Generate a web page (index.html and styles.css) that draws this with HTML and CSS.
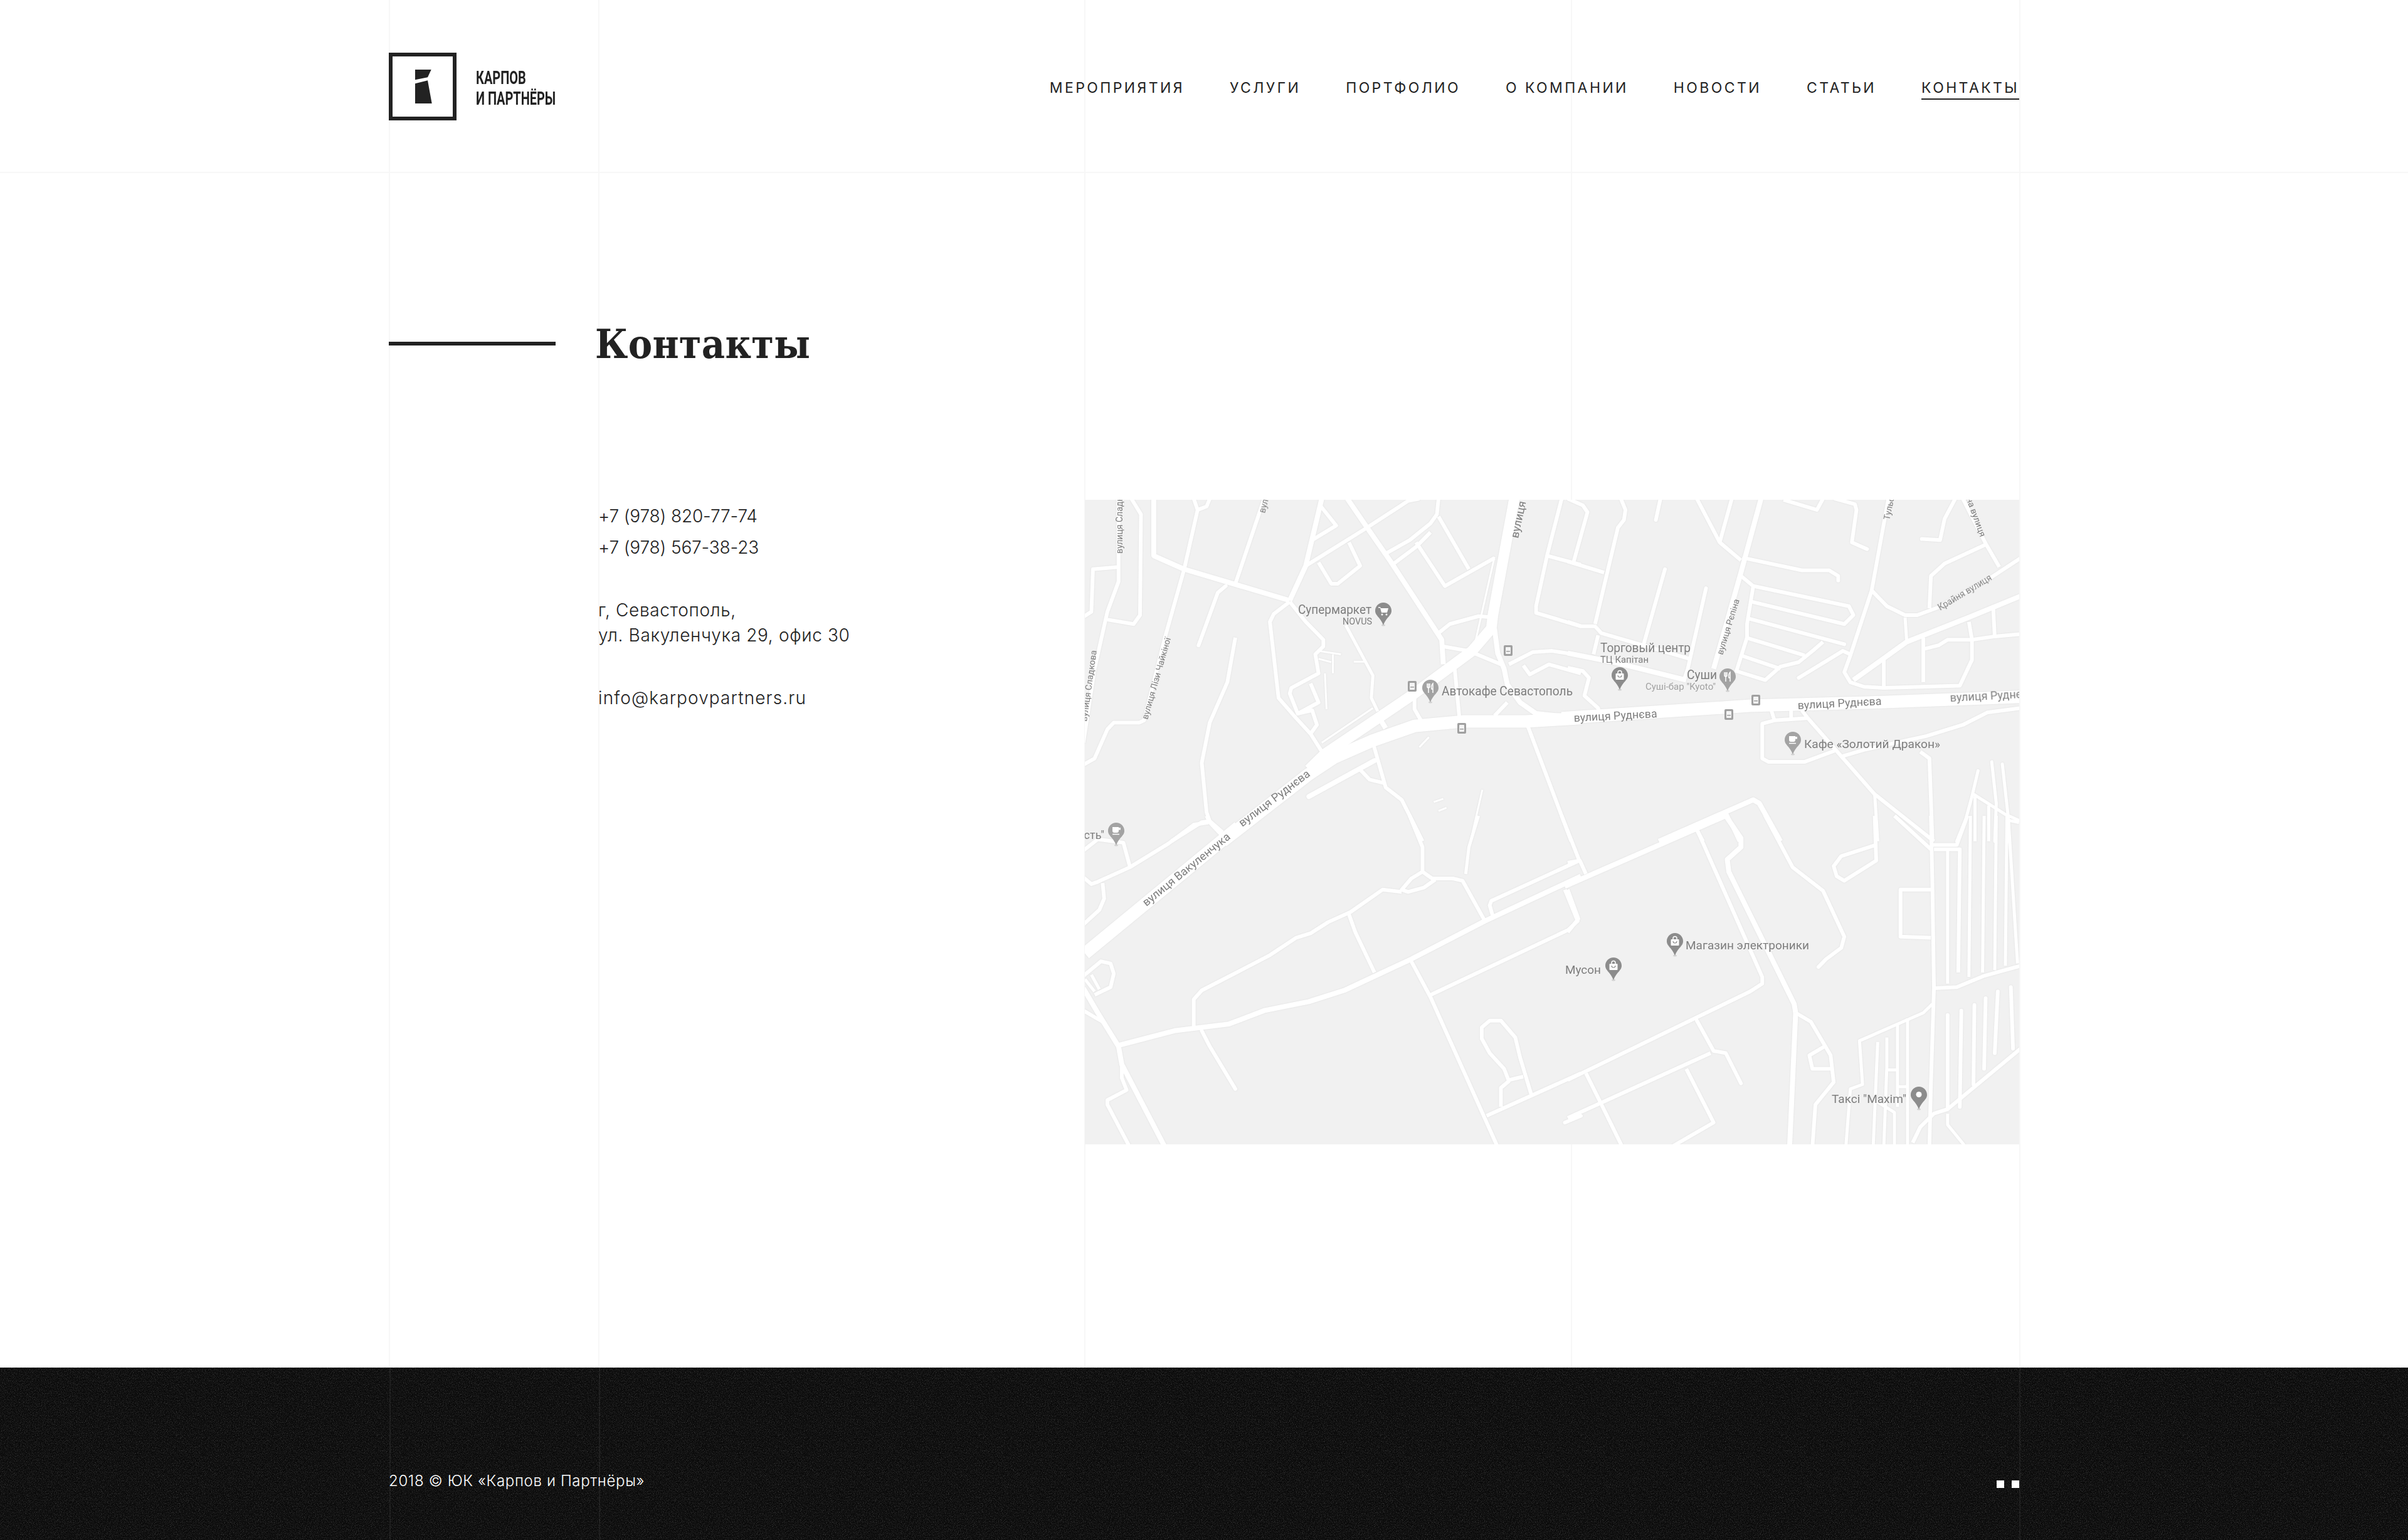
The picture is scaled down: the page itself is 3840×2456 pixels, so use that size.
FILE: index.html
```html
<!DOCTYPE html>
<html lang="ru">
<head>
    <meta charset="UTF-8">
    <title>Контакты — Карпов и Партнёры</title>
    <link rel="stylesheet" href="styles.css">
</head>
<body>

<header class="site-header">
    <div class="wrap header-row">
        <a class="logo" href="#">
            <span class="logo-mark">
                <svg viewBox="0 0 27 54" width="27" height="54"><path d="M0 0H25.700L20 12.300 0 16.300zM0 22.300L20 17.300 26.700 54H0z" fill="#222"/></svg>
            </span>
            <span class="logo-text">Карпов<br>и партнёры</span>
        </a>
        <nav class="main-nav">
            <a href="#">Мероприятия</a>
            <a href="#">Услуги</a>
            <a href="#">Портфолио</a>
            <a href="#">О компании</a>
            <a href="#">Новости</a>
            <a href="#">Статьи</a>
            <a class="active" href="#">Контакты</a>
        </nav>
    </div>
</header>

<main class="wrap">
    <div class="title-row">
        <span class="title-rule"></span>
        <h1>Контакты</h1>
    </div>

    <div class="contacts-grid">
        <div class="contacts">
            <p class="phones"><a href="#">+7 (978) 820-77-74</a><br><a href="#">+7 (978) 567-38-23</a></p>
            <p class="address">г, Севастополь,<br>ул. Вакуленчука 29, офис 30</p>
            <p class="email"><a href="#">info@karpovpartners.ru</a></p>
        </div>

        <div class="map">
            <svg viewBox="1730 796 1490 1028" width="1490" height="1028">
                <defs>
                    <g id="pin-body">
                        <ellipse cx="13" cy="36" rx="3" ry="1.500" fill="#d4d4d4"/>
                        <path d="M13 0C5.800 0 0 5.800 0 13c0 8 8 10 13 23 5-13 13-15 13-23C26 5.800 20.200 0 13 0z"/>
                    </g>
                    <g id="pin-cart" fill="#8c8c8c">
                        <use href="#pin-body"/>
                        <path d="M5 7h3l1 2h12l-2 7H10L8 8.500H5z" fill="#fff"/>
                        <circle cx="11" cy="19" r="1.500" fill="#fff"/><circle cx="18" cy="19" r="1.500" fill="#fff"/>
                    </g>
                    <g id="pin-food" fill="#a3a3a3">
                        <use href="#pin-body"/>
                        <path d="M8 6v5a2 2 0 0 0 4 0V6M10 6v15M17 21V6c-2 2-3 5-2 9h2" fill="none" stroke="#fff" stroke-width="1.500"/>
                    </g>
                    <g id="pin-bag" fill="#8c8c8c">
                        <use href="#pin-body"/>
                        <path d="M10 10V8.500a3 3 0 0 1 6 0V10" fill="none" stroke="#fff" stroke-width="1.500"/>
                        <rect x="6.500" y="10" width="13" height="10" rx="1" fill="#fff"/>
                        <path d="M10 13a3 3 0 0 0 6 0" fill="none" stroke="#8c8c8c" stroke-width="1.200"/>
                    </g>
                    <g id="pin-cafe" fill="#a3a3a3">
                        <use href="#pin-body"/>
                        <path d="M7 7h10v6a3 3 0 0 1-3 3h-4a3 3 0 0 1-3-3zM17 8h3v3.500h-3" fill="#fff"/>
                        <path d="M7 18.500h11" stroke="#fff" stroke-width="1.500"/>
                    </g>
                    <g id="pin-taxi" fill="#8c8c8c">
                        <use href="#pin-body"/>
                        <circle cx="13" cy="12.500" r="4.500" fill="#fff"/>
                    </g>
                    <g id="bus">
                        <rect width="14" height="17" rx="2" fill="#a0a0a0"/>
                        <rect x="3" y="3" width="8" height="11" rx="1" fill="#f4f4f4"/>
                        <path d="M4 9h6v1.500H4z" fill="#a0a0a0"/>
                    </g>
                </defs>

                <rect class="map-ground" x="1730" y="796" width="1490" height="1028"/>

                <g class="roads">
                    <!-- north-west part -->
                    <g transform="translate(1720 780) scale(.5102 .3571)">
                        <path class="w5" d="M165 40 195 110 192 560 172 600 90 580"/>
                        <path class="w7" d="M235 40V295L330 355 660 495"/>
                        <path class="w7" d="M660 495 710 340 750 100 760 40"/>
                        <path class="w5" d="M360 40 372 90 330 355 270 660 205 1030 190 1040H110L90 1070 50 1200 15 1228"/>
                        <path class="w5" d="M372 90 400 75 410 40"/>
                        <path class="w5" d="M580 40 490 420"/>
                        <path class="w5" d="M125 40V410L90 545 50 800 15 1130"/>
                        <path class="w5" d="M125 345 45 355 40 545 15 568"/>
                        <path class="w5 end" d="M460 430 435 460 375 695"/>
                        <path class="w5" d="M660 500 610 555 598 590 625 930 680 1020 725 1090 765 1180"/>
                        <path class="w5" d="M660 500 710 590 765 670V700L740 735 750 820 665 885 660 910 685 1000 750 950 725 865"/>
                        <path class="w5" d="M685 1000 730 985 745 1050 725 1090"/>
                        <path class="w5" d="M755 70 805 160 730 225"/>
                        <path class="w5" d="M710 340 890 180 1030 50 1065 40"/>
                        <path class="w7" d="M840 40 900 165 975 320 1135 670 1140 780"/>
                        <path class="w5" d="M845 235 880 340 810 420H790L750 325"/>
                        <path class="w5" d="M960 285 1035 225 1100 150 1120 110 1125 40"/>
                        <path class="w5" d="M985 330 1055 255 1100 190"/>
                        <path class="w5" d="M1055 235 1145 430 1300 305"/>
                        <path class="w5" d="M1125 120 1220 355"/>
                        <path class="w14" d="M1362 40 1295 560 1290 620 1230 720 1040 920 770 1180 720 1250"/>
                        <path class="w20" d="M1570 1020 1400 1035H1200L1050 1055 920 1120 800 1195 720 1270 450 1570"/>
                        <path class="w7" d="M1300 620 1310 730 1330 800 1340 870 1380 950 1430 1000 1570 1020"/>
                        <path class="w5" d="M1125 640 1160 600 1250 565 1295 570"/>
                        <path class="w5" d="M1140 700 1220 720 1320 780"/>
                        <path class="w5" d="M1345 780 1420 725 1480 720 1570 740"/>
                        <path class="w5" d="M1390 785 1410 825 1470 780 1570 820"/>
                        <path class="w5" d="M1510 40 1465 290 1430 520V550L1570 610"/>
                        <path class="w5" d="M1465 295 1570 335"/>
                        <path class="w5" d="M1175 790 1190 1015"/>
                        <path class="w5" d="M1050 920V980L1070 1030"/>
                        <path class="w7" d="M940 1020 960 1065"/>
                        <path class="w5" d="M1340 950 1300 1010"/>
                        <path class="w5" d="M1400 1040 1540 1570"/>
                        <path class="w5" d="M920 1130 960 1330 1010 1385 1040 1470 1075 1570"/>
                        <path class="w7 end" d="M720 1370 925 1210"/>
                        <path class="w5" d="M880 1250 910 1295 955 1310"/>
                        <path class="w3" d="M835 605 920 830 915 930 935 990"/>
                        <path class="w5" d="M490 660 465 860 410 1040 385 1220 400 1440 410 1480 450 1530"/>
                        <path class="w5" d="M410 1480 385 1485 290 1570"/>
                        <path class="w2" d="M770 820 775 980M750 720 820 735M795 735V820M750 755 790 770M860 768H900M760 1130 920 975M1065 1150 1095 1105M1110 1395 1140 1380M1125 1435 1150 1420M1262 1340 1225 1570M1300 300 1240 680"/>
                    </g>

                    <!-- north-east part -->
                    <g transform="translate(2500 780) scale(.4847 .3571)">
                        <path class="w5" d="M0 40 50 70 65 100 20 320"/>
                        <path class="w5" d="M0 320 120 370"/>
                        <path class="w5" d="M175 40 190 90 185 135 165 170 90 600"/>
                        <path class="w5 end" d="M305 40 290 135"/>
                        <path class="w5" d="M0 590 45 610H90L110 640 400 755"/>
                        <path class="w5" d="M100 650 85 735"/>
                        <path class="w5 end" d="M320 355 250 690"/>
                        <path class="w5 end" d="M455 440 395 800 385 840"/>
                        <path class="w7" d="M0 730 150 770 390 850"/>
                        <path class="w5" d="M0 795 50 810 70 840 55 920 100 975 105 1000"/>
                        <path class="w5" d="M425 40 500 235 570 315"/>
                        <path class="w7" d="M636 40 570 370 480 800"/>
                        <path class="w5" d="M540 40 500 235"/>
                        <path class="w5 end" d="M580 305 770 360H860L890 385V405"/>
                        <path class="w5" d="M570 385 610 430 925 520 940 560 910 600 605 500"/>
                        <path class="w5" d="M610 435 590 600V660L555 810 650 850 700 790 760 770 810 715 840 680"/>
                        <path class="w5 end" d="M595 575 910 690"/>
                        <path class="w5" d="M585 660 780 740"/>
                        <path class="w5" d="M570 740 700 800"/>
                        <path class="w5 end" d="M760 840 905 720 930 735"/>
                        <path class="w5" d="M710 45 820 90 840 40"/>
                        <path class="w5 end" d="M880 40 945 65 950 90 935 235 985 265"/>
                        <path class="w5" d="M1055 40 1000 450 930 740 910 815 930 860 975 880 1040 885 1290 875 1330 760V670L1320 590"/>
                        <path class="w5" d="M1000 450 1050 520 1110 560H1150L1220 525 1395 390 1490 305"/>
                        <path class="w5 end" d="M1165 220 1225 225 1240 130 1275 40"/>
                        <path class="w5" d="M1300 40 1375 240 1420 345"/>
                        <path class="w5" d="M1375 245 1240 330 1195 385 1190 530"/>
                        <path class="w3" d="M1110 570 1115 670"/>
                        <path class="w7" d="M940 850 1115 680 1320 570 1490 475"/>
                        <path class="w5" d="M1040 760V885M1170 660V860"/>
                        <path class="w5" d="M1175 710 1220 695 1250 670H1330L1405 655 1490 645"/>
                        <path class="w5" d="M1400 530 1405 660"/>
                        <path class="w20" d="M-20 1020 600 965 1000 950 1490 925"/>
                        <path class="w5" d="M670 985 680 1030 640 1045V1200L660 1215H780L880 1165"/>
                        <path class="w5" d="M680 1030 790 1020M735 985V1020"/>
                        <path class="w5" d="M770 985 790 1020 1010 1360 1205 1570"/>
                        <path class="w5" d="M905 1190 980 1160 1180 1100 1300 1050 1380 995 1490 975"/>
                        <path class="w5" d="M1160 1170 1190 1200 1200 1570"/>
                        <path class="w3" d="M1010 1360 1020 1570"/>
                        <path class="w3 end" d="M1350 1255 1330 1370 1310 1470 1280 1570"/>
                        <path class="w3 end" d="M1395 1215 1410 1400 1405 1570"/>
                        <path class="w3 end" d="M1430 1225 1450 1470V1570"/>
                        <path class="w3" d="M1335 1360 1440 1450 1490 1480"/>
                        <path class="w3" d="M1385 1410V1570M1340 1370V1570"/>
                        <path class="w7" d="M300 1570 610 1385 630 1400 700 1570"/>
                        <path class="w5" d="M520 1440 565 1570M425 1520 445 1570"/>
                    </g>

                    <!-- south-west part -->
                    <g transform="translate(1720 1300) scale(.5102 .3571)">
                        <path class="w20" d="M500 50 20 615"/>
                        <path class="w5" d="M400 0 410 30 450 90"/>
                        <path class="w5" d="M405 30 360 40 280 125 160 230 60 295 40 305 15 275"/>
                        <path class="w5" d="M15 155 60 105 140 120 160 225"/>
                        <path class="w5" d="M75 300 80 370 65 420 15 485"/>
                        <path class="w5" d="M1035 0 1075 140V250L1105 280H1170L1200 290 1270 470"/>
                        <path class="w3" d="M1250 0 1220 140 1210 260"/>
                        <path class="w5" d="M1075 250 1040 280 1010 330 1030 340 1080 320 1115 285"/>
                        <path class="w5" d="M1010 340 950 330 850 430 780 475 725 525 680 545 595 625 385 780 360 820V945"/>
                        <path class="w5" d="M845 440 865 520 925 700"/>
                        <path class="w10" d="M1570 270 1270 470 1040 640 830 780 720 830 580 870 470 930 300 960 125 1025"/>
                        <path class="w5" d="M1510 0 1565 200 1290 380 1285 400 1295 450"/>
                        <path class="w5" d="M1520 330 1560 470 1530 510 1100 800"/>
                        <path class="w5" d="M1040 650 1100 810 1310 1480"/>
                        <path class="w5 end" d="M385 960 410 1030 490 1220"/>
                        <path class="w7" d="M15 770 60 880 125 1030 135 1110 270 1480"/>
                        <path class="w5" d="M15 870 75 920"/>
                        <path class="w5" d="M135 1110V1170L150 1225 90 1270V1290L160 1480"/>
                        <path class="w5" d="M15 715 70 650 100 660 110 705 100 765 50 800"/>
                        <path class="w3" d="M40 710 65 775M20 730 50 785"/>
                        <path class="w5" d="M1415 1245 1380 1080 1365 990 1320 915H1285L1260 945V995L1285 1060 1330 1130 1345 1185 1320 1215V1300"/>
                        <path class="w5" d="M1345 1180 1390 1165"/>
                        <path class="w5" d="M1570 1150 1275 1340"/>
                        <path class="w5 end" d="M1520 1370 1570 1340"/>
                    </g>

                    <!-- south-east part -->
                    <g transform="translate(2500 1300) scale(.4847 .3571)">
                        <path class="w10" d="M-10 315 420 60 520 0"/>
                        <path class="w7" d="M520 0 570 100V140L525 195 530 250 745 840 750 880"/>
                        <path class="w5" d="M425 60 640 720V750L600 785 0 1180"/>
                        <path class="w5 end" d="M650 0 740 230 840 335 910 540 900 590 850 640 825 675"/>
                        <path class="w5" d="M0 210 40 200 60 260"/>
                        <path class="w5" d="M0 330 35 460 0 520"/>
                        <path class="w5 end" d="M425 915 480 1050 520 1060 570 1195"/>
                        <path class="w5" d="M470 1060 0 1350"/>
                        <path class="w5" d="M60 1150 115 1300 180 1480"/>
                        <path class="w5" d="M390 1130 480 1370 340 1480"/>
                        <path class="w7" d="M750 880 730 1480"/>
                        <path class="w5" d="M750 880 800 920 865 1070 875 1190 815 1290 805 1480"/>
                        <path class="w5" d="M845 1030 795 1070 805 1130H875"/>
                        <path class="w5" d="M1010 0 1015 200 910 290 885 270 875 225 900 180 1015 130"/>
                        <path class="w5" d="M1075 0 1195 150"/>
                        <path class="w5" d="M1195 0 1200 320 1205 770 1195 1200 1190 1480"/>
                        <path class="w5" d="M1195 130H1280L1315 0"/>
                        <path class="w5" d="M1195 330H1095V540L1195 545"/>
                        <path class="w5" d="M1205 150H1290L1285 700"/>
                        <path class="w3" d="M1250 150V750M1325 0 1320 720M1370 0 1365 700M1410 0 1405 690M1445 0 1440 670M1485 30 1450 20 1480 660"/>
                        <path class="w5" d="M1205 770 1280 765 1370 715 1490 670"/>
                        <path class="w5 end" d="M1250 890V1310M1295 870 1290 1300M1338 845 1335 1200M1375 815 1370 1130M1415 785 1405 1060M1458 765 1465 1040"/>
                        <path class="w5" d="M1490 1040 1250 1310 1205 1330 1160 1390 1135 1460"/>
                        <path class="w3" d="M1200 840 1170 880 960 1005 970 1200 930 1220 915 1480"/>
                        <path class="w3" d="M1020 1010 1005 1480M1050 990V1120L1040 1480M1085 930V1300M1118 905V1480M1050 1135H1085M1085 1210H1118M1010 1270 1075 1325V1480"/>
                        <path class="w3" d="M1250 1330V1380L1310 1480"/>
                    </g>
                </g>

                <use href="#bus" x="2398" y="1028"/>
                <use href="#bus" x="2245" y="1085"/>
                <use href="#bus" x="2324" y="1152"/>
                <use href="#bus" x="2793" y="1107"/>
                <use href="#bus" x="2750" y="1130"/>

                <g class="labels">
                    <text x="2070" y="978" font-size="20" textLength="117" lengthAdjust="spacingAndGlyphs">Супермаркет</text>
                    <text x="2141" y="995" font-size="15" textLength="47" lengthAdjust="spacingAndGlyphs">NOVUS</text>
                    <text x="2299" y="1108" font-size="20" textLength="209" lengthAdjust="spacingAndGlyphs">Автокафе Севастополь</text>
                    <text x="2552" y="1039" font-size="20" textLength="144" lengthAdjust="spacingAndGlyphs">Торговый центр</text>
                    <text x="2552" y="1056" font-size="15" textLength="77" lengthAdjust="spacingAndGlyphs">ТЦ Капітан</text>
                    <text x="2690" y="1082" font-size="20" textLength="48" lengthAdjust="spacingAndGlyphs">Суши</text>
                    <text class="faint" x="2624" y="1099" font-size="15" textLength="112" lengthAdjust="spacingAndGlyphs">Суші-бар "Kyoto"</text>
                    <text x="2877" y="1192" font-size="18" textLength="217" lengthAdjust="spacingAndGlyphs">Кафе «Золотий Дракон»</text>
                    <text x="1761" y="1337" font-size="18" text-anchor="end">сть"</text>
                    <text x="2688" y="1513" font-size="19" textLength="197" lengthAdjust="spacingAndGlyphs">Магазин электроники</text>
                    <text x="2496" y="1552" font-size="19" textLength="57" lengthAdjust="spacingAndGlyphs">Мусон</text>
                    <text x="2921" y="1758" font-size="19" textLength="119" lengthAdjust="spacingAndGlyphs">Таксі "Maxim"</text>

                    <text x="2510" y="1150" font-size="18" textLength="133" lengthAdjust="spacingAndGlyphs" transform="rotate(-3 2510 1150)">вулиця Руднєва</text>
                    <text x="2867" y="1130" font-size="18" textLength="134" lengthAdjust="spacingAndGlyphs" transform="rotate(-3 2867 1130)">вулиця Руднєва</text>
                    <text x="3110" y="1118" font-size="18" transform="rotate(-3 3110 1118)">вулиця Руднєва</text>
                    <text x="1981" y="1318" font-size="18" textLength="137" lengthAdjust="spacingAndGlyphs" transform="rotate(-37 1981 1318)">вулиця Руднєва</text>
                    <text x="1828" y="1445" font-size="18" textLength="174" lengthAdjust="spacingAndGlyphs" transform="rotate(-39 1828 1445)">вулиця Вакуленчука</text>
                    <text x="1790" y="882" font-size="14" transform="rotate(-90 1790 882)">вулиця Сладкова</text>
                    <text x="1733" y="1150" font-size="14" transform="rotate(-82 1733 1150)">вулиця Сладкова</text>
                    <text x="1830" y="1147" font-size="14" textLength="135" lengthAdjust="spacingAndGlyphs" transform="rotate(-74 1830 1147)">вулиця Лізи Чайкіної</text>
                    <text x="2017" y="818" font-size="14" transform="rotate(-75 2017 818)">вулиця</text>
                    <text x="2421" y="858" font-size="18" transform="rotate(-78 2421 858)">вулиця</text>
                    <text x="2747" y="1044" font-size="14" textLength="92" lengthAdjust="spacingAndGlyphs" transform="rotate(-73 2747 1044)">вулиця Рєпіна</text>
                    <text x="3094" y="973" font-size="14" textLength="97" lengthAdjust="spacingAndGlyphs" transform="rotate(-31 3094 973)">Крайня вулиця</text>
                    <text x="3013" y="829" font-size="14" transform="rotate(-78 3013 829)">Тульська</text>
                    <text x="3158" y="856" font-size="14" text-anchor="end" transform="rotate(70 3158 856)">Зелена вулиця</text>
                </g>

                <use href="#pin-cart" x="2193" y="960"/>
                <use href="#pin-food" x="2268" y="1083"/>
                <use href="#pin-bag" x="2570" y="1063"/>
                <use href="#pin-food" x="2742" y="1065"/>
                <use href="#pin-cafe" x="2846" y="1166"/>
                <use href="#pin-cafe" x="1767" y="1311"/>
                <use href="#pin-bag" x="2658" y="1487"/>
                <use href="#pin-bag" x="2560" y="1526"/>
                <use href="#pin-taxi" x="3047" y="1732"/>
            </svg>
        </div>
    </div>
</main>

<footer class="site-footer">
    <!-- film grain over the dark background -->
    <svg class="grain" width="3840" height="276">
        <filter id="grain-filter" color-interpolation-filters="sRGB" x="0" y="0" width="100%" height="100%">
            <feTurbulence type="fractalNoise" baseFrequency="0.8" numOctaves="2" seed="4"/>
            <feColorMatrix values="0 0 0 0 .3  0 0 0 0 .3  0 0 0 0 .3  1.2 1.2 0 0 -1.12"/>
        </filter>
        <rect width="3840" height="276" filter="url(#grain-filter)"/>
    </svg>
    <div class="wrap footer-row">
        <span class="copyright">2018 © ЮК «Карпов и Партнёры»</span>
        <span class="dots"><i></i><i></i></span>
    </div>
</footer>

</body>
</html>
```

FILE: styles.css
```css
/* page and grid lines */
html, body { margin: 0; padding: 0; }
body {
    font-family: Inter, "Liberation Sans", sans-serif;
    font-weight: 300;
    color: #222;
    background-color: #fff;
    background-image:
        linear-gradient(#f7f7f7, #f7f7f7), linear-gradient(#f7f7f7, #f7f7f7),
        linear-gradient(#f7f7f7, #f7f7f7), linear-gradient(#f7f7f7, #f7f7f7),
        linear-gradient(#f7f7f7, #f7f7f7);
    background-size: 2px 100%;
    background-repeat: no-repeat;
    background-position: 620px 0, 954px 0, 1729px 0, 2505px 0, 3220px 0;
}
a { color: inherit; text-decoration: none; }
.wrap { width: 2600px; margin: 0 auto; }

/* header */
.site-header { height: 274px; border-bottom: 2px solid #f7f7f7; }
.header-row { height: 274px; display: flex; align-items: center; justify-content: space-between; }
.logo { display: flex; align-items: center; gap: 31px; margin-top: 2px; }
.logo-mark {
    box-sizing: border-box;
    width: 108px;
    height: 108px;
    border: 6px solid #222;
    display: flex;
    align-items: center;
    justify-content: center;
}
.logo-mark svg { display: block; margin-left: 2px; }
.logo-text {
    display: block;
    width: 127px;
    font-family: Roboto, "Liberation Sans", sans-serif;
    font-weight: 700;
    font-size: 30px;
    line-height: 33px;
    color: #222;
    text-transform: uppercase;
    white-space: nowrap;
    transform: scaleX(.665);
    transform-origin: left center;
    margin-top: 4px;
}
.main-nav { display: flex; gap: 72px; margin-top: 10px; }
.main-nav a {
    font-size: 23px;
    font-weight: 400;
    line-height: 30px;
    letter-spacing: 3.4px;
    color: #222;
    text-transform: uppercase;
    padding-bottom: 2px;
    border-bottom: 2px solid transparent;
}
.main-nav a.active { border-bottom-color: #222; }

/* title */
.title-row { display: flex; align-items: center; gap: 63px; padding-top: 238px; }
.title-rule { width: 266px; height: 6px; background: #222; margin-top: -2px; }
h1 {
    margin: 0;
    font-family: "DejaVu Serif Condensed", "DejaVu Serif", serif;
    font-stretch: condensed;
    font-weight: 700;
    font-size: 64px;
    line-height: 70px;
    color: #222;
    letter-spacing: .3px;
}

/* contacts + map */
.contacts-grid {
    display: grid;
    grid-template-columns: 335px 775px 1490px;
    padding-top: 213px;
    padding-bottom: 356px;
}
.contacts { grid-column: 2; font-size: 28px; line-height: 40px; margin-left: -1px; }
.contacts p { margin: 0 0 60px; }
.contacts .phones { line-height: 50px; margin-top: 1px; margin-bottom: 55px; letter-spacing: -.15px; }
.contacts .address { letter-spacing: .65px; }
.contacts .email { letter-spacing: 1.1px; }
.map { height: 1028px; overflow: hidden; }
.map svg { display: block; }
.map-ground { fill: #f1f1f1; }
.roads { filter: drop-shadow(0 0 1px #dedede); }
.roads path {
    fill: none;
    stroke: #fff;
    stroke-linejoin: round;
    vector-effect: non-scaling-stroke;
}
.roads .end { stroke-linecap: round; }
.w2 { stroke-width: 3; }
.w3 { stroke-width: 5; }
.w5 { stroke-width: 6; }
.w7 { stroke-width: 8; }
.w10 { stroke-width: 8; }
.w14 { stroke-width: 17; }
.w20 { stroke-width: 20; }
.labels text { font-family: Roboto, "Liberation Sans", sans-serif; font-weight: 400; fill: #7e7e7e; }
.labels .faint { fill: #a2a2a2; }

/* footer */
.site-footer {
    position: relative;
    height: 276px;
    overflow: hidden;
    background-color: #0a0a0a;
    background-image: linear-gradient(#191919, #191919), linear-gradient(#191919, #191919), linear-gradient(#191919, #191919);
    background-size: 2px 100%;
    background-repeat: no-repeat;
    background-position: 621px 0, 955px 0, 3220px 0;
}
.grain { position: absolute; left: 0; top: 0; }
.footer-row { position: relative; display: flex; justify-content: space-between; padding-top: 166px; }
.copyright { font-size: 24px; line-height: 30px; letter-spacing: .65px; color: #fff; }
.dots { display: flex; gap: 12px; padding-top: 14px; }
.dots i { display: block; width: 12px; height: 12px; background: #fff; }
```
